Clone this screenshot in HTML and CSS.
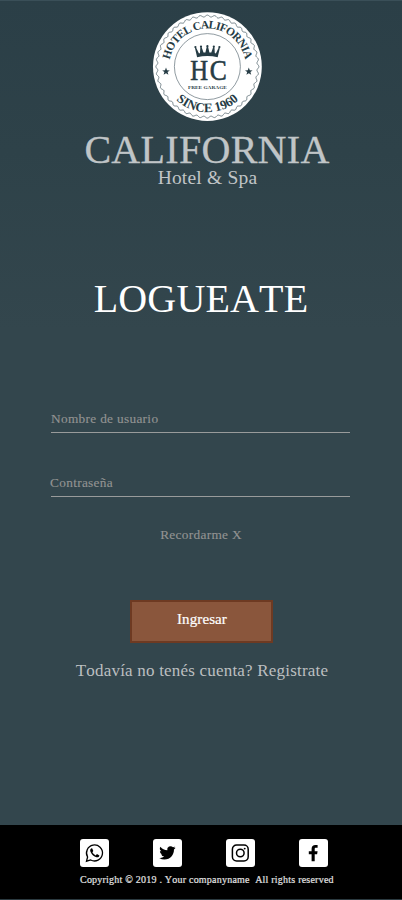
FILE: index.html
```html
<!DOCTYPE html>
<html lang="es">
<head>
<meta charset="utf-8">
<meta name="viewport" content="width=device-width, initial-scale=1">
<title>California Hotel &amp; Spa</title>
<link rel="stylesheet" href="styles.css">
</head>
<body>
<main class="page">
  <header class="brand">
    <svg class="seal" viewBox="-55.4 -54.6 110 110" role="img" aria-label="Hotel California">
      <defs>
        <path id="arcTop" d="M-36.4 12 A38.3 38.3 0 1 1 36.4 12"/>
        <path id="arcBottom" d="M-44.8 9 A45.7 45.7 0 0 0 44.8 9"/>
        <path id="star" d="M0-4 1-1.3 3.8-1.2 1.6.5 2.4 3.2 0 1.6-2.4 3.2-1.6.5-3.8-1.2-1-1.3Z"/>
      </defs>
      <circle r="54.4" fill="#fff"/>
      <g id="wave"></g>
      <circle r="33" fill="none" stroke="#607078" stroke-width=".7"/>
      <g class="ink">
        <text class="arc-top"><textPath href="#arcTop" startOffset="50%" text-anchor="middle" textLength="106">HOTEL CALIFORNIA</textPath></text>
        <text class="arc-bottom"><textPath href="#arcBottom" startOffset="50%" text-anchor="middle" textLength="69">SINCE 1960</textPath></text>
        <use href="#star" x="-41.4" y="5"/>
        <use href="#star" x="41.4" y="5"/>
        <path d="M-10.3-9.4-12.6-19.4-11.6-19.6-8.4-13.2-7.4-13.5-7-20-6-20-3.9-14-2-14.2-.5-20.5H.5L2-14.2 3.9-14 6-20 7-20 7.4-13.5 8.4-13.2 11.6-19.6 12.6-19.4 10.3-9.4Q0-12-10.3-9.4Z"/>
        <circle cx="-12" cy="-19.6" r="1.1"/><circle cx="-6.4" cy="-20.1" r="1.1"/><circle cx="0" cy="-20.4" r="1.1"/><circle cx="6.4" cy="-20.1" r="1.1"/><circle cx="12" cy="-19.6" r="1.1"/>
        <text class="initials" y="13.6" x="-17.2" textLength="17.8" lengthAdjust="spacingAndGlyphs">H</text>
        <text class="initials" y="13.6" x="2.4" textLength="17" lengthAdjust="spacingAndGlyphs">C</text>
        <text class="garage" y="22" x="-19.5" textLength="39" lengthAdjust="spacingAndGlyphs">FREE GARAGE</text>
      </g>
    </svg>
    <div class="name">CALIFORNIA</div>
    <div class="tagline">Hotel &amp; Spa</div>
  </header>
  <h1 class="title">LOGUEATE</h1>
  <form class="login">
    <div class="field">Nombre de usuario</div>
    <div class="field second"><span class="label">Contraseña</span></div>
    <div class="remember">Recordarme X</div>
    <button class="submit" type="button">Ingresar</button>
    <div class="register">Todavía no tenés cuenta? Registrate</div>
  </form>
  <footer class="footer">
    <div class="social">
      <a class="tile"><svg viewBox="0 0 29 28"><path d="M6.5 22.2 7.6 18A8 8 0 1 1 10.7 21Z" fill="none" stroke="#000" stroke-width="1.3"/><path d="M11.4 9.2C10.2 10 9.8 11.3 10.6 12.9 12 15.7 13.8 17.4 16.5 18.2 17.9 18.6 19.2 17.8 19.4 16.4L16.9 15.1 15.8 16.4C14.2 15.7 13.1 14.7 12.4 13.3L13.3 12.1 12.3 9.4Z"/></svg></a>
      <a class="tile"><svg viewBox="0 0 29 28"><path transform="translate(6.3 5.7) scale(.68)" d="M23.95 4.57a10 10 0 0 1-2.82.77 4.96 4.96 0 0 0 2.16-2.72c-.95.56-2 .96-3.13 1.18a4.92 4.92 0 0 0-8.38 4.48C7.69 8.1 4.07 6.13 1.64 3.16a4.9 4.9 0 0 0 1.52 6.57 4.9 4.9 0 0 1-2.23-.61v.06a4.92 4.92 0 0 0 3.95 4.83 5 5 0 0 1-2.21.08 4.94 4.94 0 0 0 4.6 3.42A9.87 9.87 0 0 1 0 19.54a14 14 0 0 0 7.55 2.21c9.05 0 14-7.5 14-13.98l-.02-.64a9.9 9.9 0 0 0 2.42-2.56z"/></svg></a>
      <a class="tile"><svg viewBox="0 0 29 28"><g fill="none" stroke="#000" stroke-width="1.5"><rect x="6.4" y="6.1" width="15.8" height="15.8" rx="4.2"/><circle cx="14.3" cy="14" r="3.8"/></g><circle cx="18.7" cy="9.6" r=".95"/></svg></a>
      <a class="tile"><svg viewBox="0 0 29 28"><path d="M12.6 22.2V15.2H9.8V12.2H12.6V9.8C12.6 7.3 14 5.9 16.4 5.9H18.6V8.7H17.1C16 8.7 15.7 9.2 15.7 10.1V12.2H18.6L18.1 15.2H15.7V22.2Z"/></svg></a>
    </div>
    <div class="copyright">Copyright © 2019 . Your companyname&nbsp; All rights reserved</div>
  </footer>
</main>
<script src="seal.js"></script>
</body>
</html>
```

FILE: styles.css
```css
* { box-sizing: border-box; }

body {
  margin: 0;
  font-family: "Liberation Serif", "Times New Roman", serif;
  font-kerning: none;
}

.page {
  width: 402px;
  height: 900px;
  display: flex;
  flex-direction: column;
  border-top: 1px solid #3a4f58;
  border-bottom: 1px solid #2b3a40;
  background: linear-gradient(#2b3f47 0, #2e4249 150px, #33464d 330px, #33464d 100%);
}

.brand {
  display: flex;
  flex-direction: column;
  align-items: center;
  padding: 11px 0 0 12px;
}

.seal { display: block; width: 110px; height: 110px; }
.ink { fill: #263c45; }
.arc-top { font-size: 11.5px; font-weight: bold; }
.arc-bottom { font-size: 13px; font-weight: bold; }
.initials { font-size: 29px; stroke: #263c45; stroke-width: .6px; }
.garage { font-size: 5px; font-weight: bold; }

.name {
  margin-top: 10px;
  font-size: 40px;
  line-height: 36px;
  letter-spacing: .3px;
  color: #c0c5c7;
  -webkit-text-stroke: .3px #c0c5c7;
}

.tagline {
  padding-left: 1px;
  font-size: 19.5px;
  line-height: 20px;
  letter-spacing: .2px;
  color: #c0c5c7;
}

.title {
  margin: 91px 0 0;
  font-size: 40px;
  font-weight: normal;
  line-height: 40px;
  letter-spacing: .15px;
  text-align: center;
  color: #fff;
}

.login {
  display: flex;
  flex-direction: column;
  align-items: center;
  margin-top: 92px;
  color: #929392;
  font-size: 13.3px;
  line-height: 16px;
  letter-spacing: .32px;
  -webkit-text-stroke: .15px #929392;
}

.field {
  width: 299px;
  height: 22px;
  margin-right: 1px;
  border-bottom: 1px solid #999b9b;
}

.second { margin-top: 42px; }
.label { margin-left: -1px; }
.remember { margin-top: 30px; }

.submit {
  width: 143px;
  height: 43px;
  margin-top: 57px;
  padding: 0 0 5px 2px;
  border: 2px solid #6e3a22;
  background: #8a563c;
  color: #fff;
  font: 15px/18px "Liberation Serif", serif;
  letter-spacing: .1px;
  -webkit-text-stroke: .2px #fff;
}

.register {
  margin-top: 18px;
  padding-left: 2px;
  font-size: 17px;
  line-height: 20px;
  letter-spacing: .2px;
  color: #bcbfc0;
  -webkit-text-stroke: 0;
}

.footer {
  height: 74px;
  margin-top: auto;
  padding: 14px 0 0 80px;
  background: #000;
}

.social { display: flex; gap: 44px; }

.tile {
  width: 29px;
  height: 28px;
  border-radius: 3px;
  background: #fff;
}

.tile svg { display: block; width: 29px; height: 28px; }

.copyright {
  margin-top: 6px;
  font-size: 10px;
  line-height: 13px;
  letter-spacing: .22px;
  white-space: nowrap;
  color: #e2e2e2;
  -webkit-text-stroke: .2px #e2e2e2;
}
```

FILE: seal.js
```js
// Scalloped ring near the edge of the seal
const points = [];
for (let i = 0; i <= 720; i++) {
  const a = i * Math.PI / 360;
  const r = 50.6 + 0.9 * Math.cos(a * 44);
  points.push((r * Math.cos(a)).toFixed(2) + "," + (r * Math.sin(a)).toFixed(2));
}
const ring = document.createElementNS("http://www.w3.org/2000/svg", "polyline");
ring.setAttribute("points", points.join(" "));
ring.setAttribute("fill", "none");
ring.setAttribute("stroke", "#52646c");
ring.setAttribute("stroke-width", "0.8");
document.getElementById("wave").appendChild(ring);
```
